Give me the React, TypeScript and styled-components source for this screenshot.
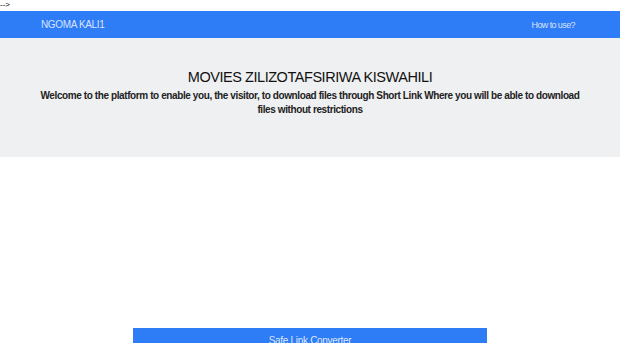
import React from 'react';
import styled, { createGlobalStyle } from 'styled-components';

const GlobalStyle = createGlobalStyle`
  html, body {
    margin: 0;
    padding: 0;
    background: #fff;
    font-family: "Liberation Sans", Arial, sans-serif;
  }
`;

const Stray = styled.div`
  height: 11px;
  box-sizing: border-box;
  padding-top: 1px;
  font-size: 8px;
  line-height: 8px;
  color: #000;
`;

const Navbar = styled.nav`
  height: 27px;
  background: #2e7cf6;
  display: flex;
  align-items: center;
  justify-content: space-between;
  padding: 0 45px 0 41px;
`;

const NavLink = styled.a<{ $size?: number; $spacing?: number }>`
  color: rgba(255, 255, 255, 0.82);
  font-size: ${({ $size }) => $size || 10}px;
  letter-spacing: ${({ $spacing }) => $spacing ?? -0.6}px;
  text-decoration: none;
`;

const Jumbotron = styled.header`
  background: #eff0f2;
  height: 119px;
  box-sizing: border-box;
  padding-top: 31px;
  text-align: center;
`;

const Title = styled.h1`
  margin: 0 0 4px;
  font-size: 14.5px;
  letter-spacing: -0.45px;
  font-weight: 400;
  color: #111;
`;

const Lead = styled.p`
  margin: 0 auto;
  max-width: 550px;
  font-size: 10px;
  letter-spacing: -0.4px;
  line-height: 14px;
  font-weight: 700;
  color: #222;
`;

const Main = styled.main`
  display: flex;
  justify-content: center;
  align-items: flex-start;
  padding-top: 171px;
`;

const Button = styled.button`
  width: 354px;
  border: none;
  background: #2e7cf6;
  color: rgba(255, 255, 255, 0.85);
  font-family: "Liberation Sans", Arial, sans-serif;
  font-size: 10px;
  letter-spacing: -0.3px;
  line-height: 14px;
  padding: 6px 0;
  text-align: center;
`;

export default function App() {
  return (
    <>
      <GlobalStyle />
      <Stray>--&gt;</Stray>
      <Navbar>
        <NavLink href="#" $size={10} $spacing={-0.35}>NGOMA KALI1</NavLink>
        <NavLink href="#" $size={9}>How to use?</NavLink>
      </Navbar>
      <Jumbotron>
        <Title>MOVIES ZILIZOTAFSIRIWA KISWAHILI</Title>
        <Lead>
          Welcome to the platform to enable you, the visitor, to download files through Short Link Where you will be able to download files without restrictions
        </Lead>
      </Jumbotron>
      <Main>
        <Button>Safe Link Converter</Button>
      </Main>
    </>
  );
}
